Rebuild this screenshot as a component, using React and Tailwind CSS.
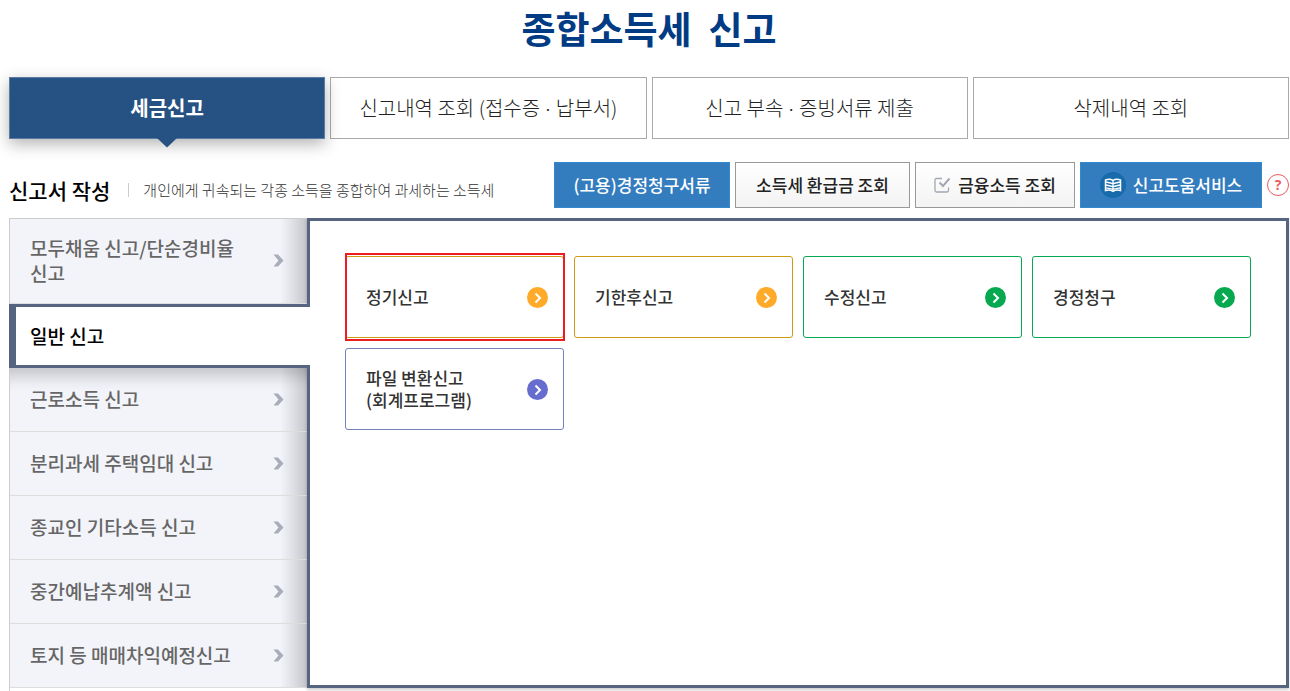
import React from "react";

const tabs = [
  ["세금신고"],
  ["신고내역 조회 (접수증", "납부서)"],
  ["신고 부속", "증빙서류 제출"],
  ["삭제내역 조회"],
];

const menu = [
  { label: "모두채움 신고/단순경비율 신고", tall: true },
  { label: "일반 신고", active: true },
  { label: "근로소득 신고", below: true },
  { label: "분리과세 주택임대 신고" },
  { label: "종교인 기타소득 신고" },
  { label: "중간예납추계액 신고" },
  { label: "토지 등 매매차익예정신고" },
];

const cards = [
  { label: "정기신고", border: "border-[#cf9b14]", dot: "bg-[#ffaa28]", selected: true },
  { label: "기한후신고", border: "border-[#cf9b14]", dot: "bg-[#ffaa28]" },
  { label: "수정신고", border: "border-[#06a94f]", dot: "bg-[#06a94f]" },
  { label: "경정청구", border: "border-[#06a94f]", dot: "bg-[#06a94f]" },
  { label: "파일 변환신고\n(회계프로그램)", border: "border-[#7581bb]", dot: "bg-[#666dcf]" },
];

function Tab({ parts, active }) {
  if (active) {
    return (
      <button
        type="button"
        aria-current="page"
        className="relative h-[62px] border border-[#5b7ba2] bg-[#265183] text-xl font-bold text-white shadow-[0_5px_15px_rgba(0,0,0,0.3)]"
      >
        {parts[0]}
        <svg
          className="absolute top-full left-1/2 -translate-x-1/2"
          width="20"
          height="10"
          viewBox="0 0 20 10"
          aria-hidden="true"
        >
          <path d="M0 0H20L10 9.5Z" fill="#265183" />
        </svg>
      </button>
    );
  }
  return (
    <button type="button" className="h-[62px] border border-[#aaaaaa] bg-white text-xl font-light text-[#222222]">
      {parts[0]}
      {parts[1] && <span className="font-['Lato',sans-serif]">{" · "}</span>}
      {parts[1]}
    </button>
  );
}

function ToolButton({ primary, icon, width, children }) {
  const look = primary
    ? "border-[#3389d0] bg-[#337dbf] text-white"
    : "border-[#999999] bg-linear-to-b from-white to-[#f3f3f3] text-[#222222]";
  return (
    <button
      type="button"
      className={
        "flex h-[46px] items-center justify-center gap-[7px] border px-2 text-[17px] font-medium whitespace-nowrap " +
        look +
        " " +
        width
      }
    >
      {icon}
      {children}
    </button>
  );
}

function CheckIcon() {
  return (
    <svg width="17" height="17" viewBox="0 0 17 17" fill="none" stroke="#a3a7b2" aria-hidden="true">
      <path d="M8 1.5H2.5Q1 1.5 1 3V13.500Q1 15 2.500 15H13Q14.500 15 14.500 13.500V10.500" strokeWidth="1.300" />
      <path d="M5.500 5.500L9 9L15.500 1.500" strokeWidth="2" />
    </svg>
  );
}

function BookIcon() {
  return (
    <svg width="26" height="26" viewBox="0 0 26 26" aria-hidden="true">
      <circle cx="13" cy="13" r="13" fill="#186bab" />
      <path
        d="M5.500 8Q9.500 6.300 13 8.300Q16.500 6.300 20.500 8V18.500Q16.500 17.300 13 19.300Q9.500 17.300 5.500 18.500Z"
        fill="none"
        stroke="#fff"
        strokeWidth="1.500"
      />
      <path
        d="M13 8V19M6 10L12.500 11.500M6 13L12.500 14.500M6 15.800L12.500 17.200M20 10L13.500 11.500M20 13L13.500 14.500M20 15.800L13.500 17.200"
        fill="none"
        stroke="#fff"
        strokeWidth="1.300"
      />
    </svg>
  );
}

function MenuItem({ item }) {
  if (item.active) {
    return (
      <li className="relative z-10">
        <a
          href="#general"
          aria-current="page"
          className="flex h-16 items-center border-y-3 border-l-7 border-[#57647f] bg-white pb-0.5 pl-3.5 text-[19px] leading-[25px] font-medium text-black"
        >
          {item.label}
        </a>
      </li>
    );
  }
  return (
    <li
      className={
        "mr-[3px] border-b border-l border-b-[#dddddd] border-l-[#cccccc] bg-[#f3f4fa] " +
        (item.below ? "shadow-[inset_0_22px_16px_-14px_rgba(0,0,0,0.2)]" : "")
      }
    >
      <a
        href="#menu"
        className={
          "flex items-center justify-between bg-linear-to-r from-transparent from-[91%] via-black/10 via-[96%] to-black/20 pr-[23px] pl-5 text-[19px] leading-[25px] font-medium text-[#666666] " +
          (item.tall ? "h-[84px] pb-0.5" : "h-[63px]")
        }
      >
        <span className={"w-52 break-keep " + (item.tall ? "" : "pb-0.5")}>{item.label}</span>
        <svg width="11" height="13" viewBox="0 0 11 13" fill="#a9acb9" aria-hidden="true">
          <path d="M0.500 0.500H5L10.500 6.500L5 12.500H0.500L5.500 6.500Z" />
        </svg>
      </a>
    </li>
  );
}

function Card({ card }) {
  return (
    <button
      type="button"
      className={
        "relative flex h-[82px] items-center justify-between rounded-[3px] border bg-white pr-[15px] pl-5 text-left text-[17px] leading-[22px] font-medium text-[#333333] " +
        card.border
      }
    >
      <span className="whitespace-pre-line">{card.label}</span>
      <span className={"flex size-[21px] items-center justify-center rounded-full " + card.dot}>
        <svg width="21" height="21" viewBox="0 0 21 21" fill="none" stroke="#fff" strokeWidth="2" aria-hidden="true">
          <path d="M8.500 6.500L13 11L8.500 15.500" />
        </svg>
      </span>
      {card.selected && (
        <span className="pointer-events-none absolute -top-1 -right-0.5 -bottom-1 -left-px border-2 border-[#ed1c24]" />
      )}
    </button>
  );
}

export default function App() {
  return (
    <main className="flex min-h-screen flex-col bg-white pr-px pl-[9px] font-['Noto_Sans_CJK_KR','Noto_Sans',sans-serif]">
      <h1 className="h-[77px] pt-[3px] text-center text-[37px] leading-[50px] font-bold whitespace-pre text-[#003b83]">
        {"종합소득세\u00a0 신고"}
      </h1>

      <nav className="grid grid-cols-4 gap-[5px]">
        {tabs.map((parts, i) => (
          <Tab key={parts[0]} parts={parts} active={i === 0} />
        ))}
      </nav>

      <div className="mt-[23px] mb-2.5 flex items-center justify-between">
        <div className="flex items-center pt-2.5 whitespace-nowrap">
          <h2 className="text-[21px] leading-8 font-medium text-black">신고서 작성</h2>
          <span className="mr-3.5 ml-[18px] h-3.5 w-px bg-[#cccccc]" />
          <p className="text-[15px] leading-6 font-light text-[#333333]">
            개인에게 귀속되는 각종 소득을 종합하여 과세하는 소득세
          </p>
        </div>
        <div className="flex items-center gap-[5px]">
          <ToolButton primary width="min-w-[176px]">
            (고용)경정청구서류
          </ToolButton>
          <ToolButton width="min-w-[175px]">소득세 환급금 조회</ToolButton>
          <ToolButton icon={<CheckIcon />} width="min-w-40">
            금융소득 조회
          </ToolButton>
          <ToolButton primary icon={<BookIcon />} width="min-w-[182px]">
            신고도움서비스
          </ToolButton>
          <button
            type="button"
            aria-label="도움말"
            className="flex size-[22px] items-center justify-center rounded-full border border-[#ee5a5f] font-['Open_Sans',sans-serif] text-sm leading-none font-bold text-[#ee5a5f]"
          >
            ?
          </button>
        </div>
      </div>

      <div className="flex grow">
        <aside className="w-[301px] shrink-0">
          <ul className="flex h-full flex-col">
            <li className="mr-[3px] h-px bg-[#cccccc]" />
            {menu.map((item) => (
              <MenuItem key={item.label} item={item} />
            ))}
            <li className="grow border-l border-[#cccccc]" />
          </ul>
        </aside>
        <section className="mb-[3px] -ml-[3px] grow border-3 border-[#57647f] p-[35px] shadow-[0_2px_3px_rgba(0,0,0,0.2)]">
          <div className="grid grid-cols-4 gap-2.5">
            {cards.map((card) => (
              <Card key={card.label} card={card} />
            ))}
          </div>
        </section>
      </div>
    </main>
  );
}
